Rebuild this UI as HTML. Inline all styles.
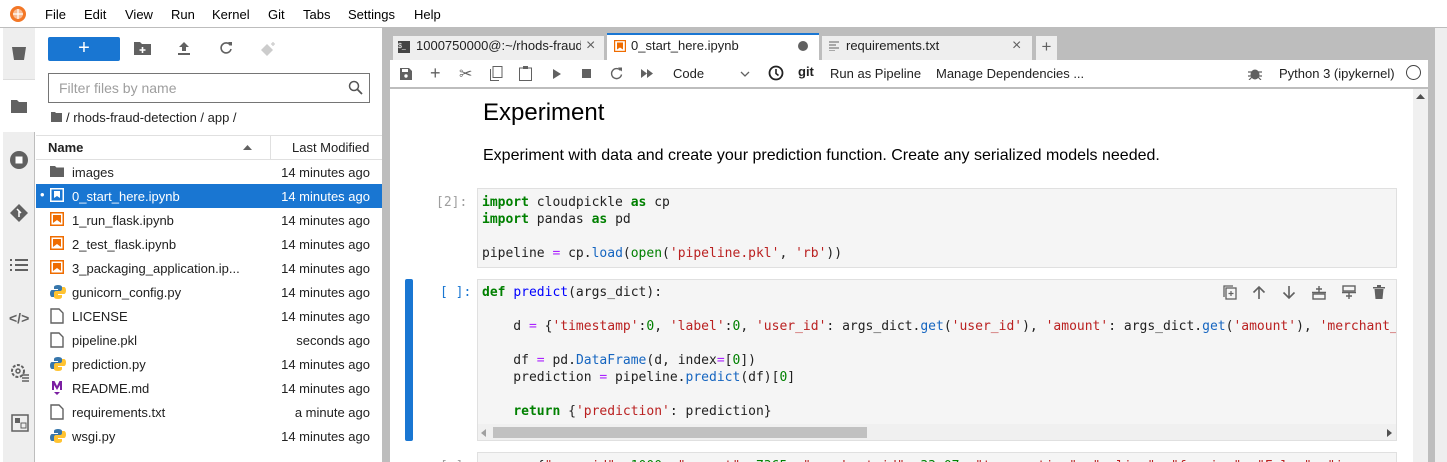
<!DOCTYPE html>
<html><head><meta charset="utf-8"><style>
*{box-sizing:border-box;margin:0;padding:0}
html,body{width:1447px;height:462px;overflow:hidden}
body{background:#fff;font-family:"Liberation Sans",sans-serif;font-size:13px;color:#212121;position:relative}
.a{position:absolute}
.menu{left:0;top:0;width:1447px;height:28px;background:#fff;border-bottom:1px solid #bdbdbd}
.menu span{position:absolute;top:7px;font-size:13px;color:#000}
.iconbar{left:3px;top:28px;width:32px;height:434px;background:#eee;border-right:1px solid #bdbdbd}
.fb{left:36px;top:28px;width:346px;height:434px;background:#fff}
.row{position:absolute;left:36px;width:346px;height:24px;font-size:13px}
.row .n{position:absolute;left:36px;top:5px}
.row .t{position:absolute;right:12px;top:5px}
.row svg{position:absolute;left:14px;top:4px}
.code{font-family:"DejaVu Sans Mono","Liberation Mono",monospace;font-size:13px;line-height:17px;white-space:pre;color:#212121}
.k{color:#008000;font-weight:bold}.s{color:#ba2121}.o{color:#aa22ff}.f{color:#0000ff}.b{color:#1565c0}.g{color:#008000}.nm{color:#008000}
</style></head><body>
<div class="a" style="left:0;top:28px;width:3px;height:434px;background:#fff"></div>
<div class="a menu">
 <svg class="a" style="left:9px;top:5px" width="18" height="18" viewBox="0 0 18 18"><circle cx="9" cy="9" r="8" fill="#f37726"/><circle cx="9" cy="9" r="5" fill="#fff" opacity=".5"/><path d="M4 9h10M9 4v10" stroke="#fff" stroke-width="1.2"/></svg>
 <span style="left:45px">File</span><span style="left:84px">Edit</span><span style="left:125px">View</span><span style="left:171px">Run</span><span style="left:212px">Kernel</span><span style="left:268px">Git</span><span style="left:303px">Tabs</span><span style="left:348px">Settings</span><span style="left:414px">Help</span>
</div>
<div class="a iconbar">
 <div class="a" style="left:0;top:0;width:32px;height:52px;background:#eee;border-bottom:1px solid #ddd"></div>
 <div class="a" style="left:0;top:52px;width:33px;height:52px;background:#fff"></div>
 <svg class="a" style="left:7px;top:16px" width="18" height="18" viewBox="0 0 18 18"><path d="M2 3h14l-2 13H4z" fill="#616161"/></svg>
 <svg class="a" style="left:7px;top:70px" width="18" height="16" viewBox="0 0 18 16"><path d="M1 2h6l2 2h8v11H1z" fill="#616161"/></svg>
 <svg class="a" style="left:6px;top:122px" width="20" height="20" viewBox="0 0 20 20"><circle cx="10" cy="10" r="9" fill="#616161"/><rect x="6.5" y="6.5" width="7" height="7" fill="#fff"/></svg>
 <svg class="a" style="left:6px;top:175px" width="20" height="20" viewBox="0 0 20 20"><path d="M10 1l9 9-9 9-9-9z" fill="#616161"/><path d="M8 6l4 4M10 8v6" stroke="#fff" stroke-width="1.5"/></svg>
 <svg class="a" style="left:7px;top:230px" width="18" height="14" viewBox="0 0 18 14"><g fill="#616161"><rect x="0" y="1" width="2" height="2"/><rect x="5" y="1" width="13" height="2"/><rect x="0" y="6" width="2" height="2"/><rect x="5" y="6" width="13" height="2"/><rect x="0" y="11" width="2" height="2"/><rect x="5" y="11" width="13" height="2"/></g></svg>
 <div class="a" style="left:6px;top:282px;font-size:14px;color:#616161;font-weight:bold">&lt;/&gt;</div>
 <svg class="a" style="left:7px;top:334px" width="20" height="20" viewBox="0 0 20 20"><circle cx="8" cy="9" r="6" fill="none" stroke="#616161" stroke-width="2" stroke-dasharray="3 1.5"/><circle cx="8" cy="9" r="2" fill="none" stroke="#616161" stroke-width="1.5"/><path d="M12 13h7M12 16h7M12 19h7" stroke="#616161" stroke-width="1.5"/></svg>
 <svg class="a" style="left:8px;top:386px" width="18" height="18" viewBox="0 0 18 18"><rect x="1" y="1" width="16" height="16" fill="none" stroke="#616161" stroke-width="1.5"/><rect x="4" y="4" width="5" height="5" fill="#616161"/><rect x="10" y="9" width="5" height="5" fill="none" stroke="#616161"/></svg>
</div>
<div class="a fb"></div>
<div class="a" style="left:48px;top:37px;width:72px;height:24px;background:#1976d2;border-radius:2px;color:#fff;font-size:20px;text-align:center;line-height:22px">+</div>
<svg class="a" style="left:134px;top:41px" width="17" height="14" viewBox="0 0 17 14"><path d="M0 1h6l2 2h9v11H0z" fill="#616161"/><path d="M8.5 6v6M5.5 9h6" stroke="#fff" stroke-width="1.6"/></svg>
<svg class="a" style="left:177px;top:41px" width="14" height="14" viewBox="0 0 14 14"><path d="M7 1l5 5H9v4H5V6H2z M1 12h12v2H1z" fill="#616161"/></svg>
<svg class="a" style="left:219px;top:41px" width="14" height="14" viewBox="0 0 14 14"><path d="M11.5 4.5A5 5 0 1 0 12 8" fill="none" stroke="#616161" stroke-width="1.6"/><path d="M9 1h4v4z" fill="#616161"/></svg>
<svg class="a" style="left:260px;top:41px" width="16" height="16" viewBox="0 0 16 16"><path d="M7 3l6 6-6 6-6-6z" fill="#ccc"/><path d="M13 1v4M11 3h4" stroke="#ccc" stroke-width="1.3"/></svg>
<div class="a" style="left:48px;top:73px;width:322px;height:30px;border:1px solid #757575;background:#fff"></div>
<div class="a" style="left:59px;top:80px;font-size:14px;color:#9e9e9e">Filter files by name</div>
<svg class="a" style="left:348px;top:80px" width="15" height="15" viewBox="0 0 15 15"><circle cx="6" cy="6" r="4.5" fill="none" stroke="#555" stroke-width="1.5"/><path d="M9.5 9.5l4.5 4.5" stroke="#555" stroke-width="1.8"/></svg>
<svg class="a" style="left:51px;top:112px" width="11" height="10" viewBox="0 0 11 10"><path d="M0 0h4l1 1h6v9H0z" fill="#616161"/></svg>
<div class="a" style="left:66px;top:110px;font-size:13px;color:#212121">/ rhods-fraud-detection / app /</div>
<div class="a" style="left:36px;top:135px;width:346px;height:25px;border-top:1px solid #e0e0e0;border-bottom:1px solid #e0e0e0"></div>
<div class="a" style="left:270px;top:135px;width:1px;height:25px;background:#e0e0e0"></div>
<div class="a" style="left:48px;top:140px;font-weight:bold;font-size:13px">Name</div>
<svg class="a" style="left:243px;top:145px" width="9" height="5"><path d="M0 5l4.5-5 4.5 5z" fill="#616161"/></svg>
<div class="a" style="left:292px;top:140px;font-size:13px">Last Modified</div>

<div class="row" style="top:160px"><svg width="14" height="14" viewBox="0 0 14 14"><path d="M0 2h5l1.5 1.5H14V13H0z" fill="#616161"/></svg><span class="n">images</span><span class="t">14 minutes ago</span></div>
<div class="row" style="top:184px;background:#1976d2;color:#fff"><span class="a" style="left:4px;top:3px">•</span><svg width="14" height="14" viewBox="0 0 14 14"><rect x=".75" y=".75" width="12.5" height="12.5" fill="none" stroke="#fff" stroke-width="1.5"/><path d="M4 3h6v7l-3-2-3 2z" fill="#fff"/></svg><span class="n">0_start_here.ipynb</span><span class="t">14 minutes ago</span></div>
<div class="row" style="top:208px"><svg width="14" height="14" viewBox="0 0 14 14"><rect x=".75" y=".75" width="12.5" height="12.5" fill="none" stroke="#ef6c00" stroke-width="1.5"/><path d="M3 3h8v8l-4-3-4 3z" fill="#ef6c00"/></svg><span class="n">1_run_flask.ipynb</span><span class="t">14 minutes ago</span></div>
<div class="row" style="top:232px"><svg width="14" height="14" viewBox="0 0 14 14"><rect x=".75" y=".75" width="12.5" height="12.5" fill="none" stroke="#ef6c00" stroke-width="1.5"/><path d="M3 3h8v8l-4-3-4 3z" fill="#ef6c00"/></svg><span class="n">2_test_flask.ipynb</span><span class="t">14 minutes ago</span></div>
<div class="row" style="top:256px"><svg width="14" height="14" viewBox="0 0 14 14"><rect x=".75" y=".75" width="12.5" height="12.5" fill="none" stroke="#ef6c00" stroke-width="1.5"/><path d="M3 3h8v8l-4-3-4 3z" fill="#ef6c00"/></svg><span class="n">3_packaging_application.ip...</span><span class="t">14 minutes ago</span></div>
<div class="row" style="top:280px"><svg width="16" height="16" viewBox="0 0 16 16"><path d="M8 1C4 1 4 3 4 3v2h4v1H2S0 6 0 9.5 2 13 2 13h2v-2s0-2 2-2h4s2 0 2-2V3s0-2-4-2z" fill="#3776ab"/><path d="M8 15c4 0 4-2 4-2v-2H8v-1h6s2 0 2-3.5S14 3 14 3h-2v2s0 2-2 2H6S4 7 4 9v4s0 2 4 2z" fill="#ffc331"/></svg><span class="n">gunicorn_config.py</span><span class="t">14 minutes ago</span></div>
<div class="row" style="top:304px"><svg width="14" height="16" viewBox="0 0 14 16"><path d="M1 1h8l4 4v10H1z" fill="none" stroke="#616161" stroke-width="1.4"/></svg><span class="n">LICENSE</span><span class="t">14 minutes ago</span></div>
<div class="row" style="top:328px"><svg width="14" height="16" viewBox="0 0 14 16"><path d="M1 1h8l4 4v10H1z" fill="none" stroke="#616161" stroke-width="1.4"/></svg><span class="n">pipeline.pkl</span><span class="t">seconds ago</span></div>
<div class="row" style="top:352px"><svg width="16" height="16" viewBox="0 0 16 16"><path d="M8 1C4 1 4 3 4 3v2h4v1H2S0 6 0 9.5 2 13 2 13h2v-2s0-2 2-2h4s2 0 2-2V3s0-2-4-2z" fill="#3776ab"/><path d="M8 15c4 0 4-2 4-2v-2H8v-1h6s2 0 2-3.5S14 3 14 3h-2v2s0 2-2 2H6S4 7 4 9v4s0 2 4 2z" fill="#ffc331"/></svg><span class="n">prediction.py</span><span class="t">14 minutes ago</span></div>
<div class="row" style="top:376px"><svg width="14" height="16" viewBox="0 0 14 16"><path d="M2 1h2.5L7 6l2.5-5H12v9H10V5L7 10 4 5v5H2z M4 12h6l-3 3z" fill="#7b1fa2"/></svg><span class="n">README.md</span><span class="t">14 minutes ago</span></div>
<div class="row" style="top:400px"><svg width="14" height="16" viewBox="0 0 14 16"><path d="M1 1h8l4 4v10H1z" fill="none" stroke="#616161" stroke-width="1.4"/></svg><span class="n">requirements.txt</span><span class="t">a minute ago</span></div>
<div class="row" style="top:424px"><svg width="16" height="16" viewBox="0 0 16 16"><path d="M8 1C4 1 4 3 4 3v2h4v1H2S0 6 0 9.5 2 13 2 13h2v-2s0-2 2-2h4s2 0 2-2V3s0-2-4-2z" fill="#3776ab"/><path d="M8 15c4 0 4-2 4-2v-2H8v-1h6s2 0 2-3.5S14 3 14 3h-2v2s0 2-2 2H6S4 7 4 9v4s0 2 4 2z" fill="#ffc331"/></svg><span class="n">wsgi.py</span><span class="t">14 minutes ago</span></div>

<div class="a" style="left:382px;top:28px;width:1065px;height:434px;background:#bdbdbd"></div>
<div class="a" style="left:1435px;top:28px;width:12px;height:434px;background:#eee"></div>
<div class="a" style="left:392px;top:35px;width:213px;height:25px;background:#eee;border:1px solid #bdbdbd;border-bottom:none"></div>
<div class="a" style="left:398px;top:41px;width:12px;height:12px;background:#444;color:#fff;font-size:7px;line-height:12px">$_</div>
<div class="a" style="left:416px;top:38px;width:165px;overflow:hidden;white-space:nowrap;font-size:13px">1000750000@:~/rhods-fraud-detection</div>
<div class="a" style="left:586px;top:37px;font-size:16px;color:#616161">×</div>
<div class="a" style="left:607px;top:33px;width:212px;height:28px;background:#fff;border-top:2px solid #1976d2"></div>
<svg class="a" style="left:614px;top:40px" width="12" height="12" viewBox="0 0 12 12"><rect x=".6" y=".6" width="10.8" height="10.8" fill="none" stroke="#ef6c00" stroke-width="1.2"/><path d="M3 2.5h6v7l-3-2-3 2z" fill="#ef6c00"/></svg>
<div class="a" style="left:631px;top:38px;font-size:13px">0_start_here.ipynb</div>
<div class="a" style="left:798px;top:41px;width:10px;height:10px;border-radius:50%;background:#616161"></div>
<div class="a" style="left:821px;top:35px;width:212px;height:25px;background:#eee;border:1px solid #bdbdbd;border-bottom:none"></div>
<svg class="a" style="left:829px;top:41px" width="10" height="10"><path d="M0 1h10M0 4h7M0 7h10M0 10h6" stroke="#616161"/></svg>
<div class="a" style="left:846px;top:38px;font-size:13px">requirements.txt</div>
<div class="a" style="left:1012px;top:37px;font-size:16px;color:#616161">×</div>
<div class="a" style="left:1035px;top:35px;width:23px;height:25px;background:#eee;border:1px solid #bdbdbd;border-bottom:none;text-align:center;font-size:17px;color:#616161;line-height:22px">+</div>
<div class="a" style="left:390px;top:60px;width:1038px;height:28px;background:#fff;border-bottom:1px solid #bdbdbd"></div>
<svg class="a" style="left:400px;top:68px" width="12" height="12"><path d="M0 0h9l3 3v9H0z" fill="#616161"/><rect x="2" y="1" width="6" height="3" fill="#fff"/><circle cx="6" cy="8" r="1.7" fill="#fff"/></svg>
<div class="a" style="left:430px;top:63px;font-size:18px;color:#616161">+</div>
<div class="a" style="left:459px;top:64px;font-size:16px;color:#616161">✂</div>
<svg class="a" style="left:490px;top:66px" width="13" height="15"><rect x="3" y=".5" width="9" height="11" fill="none" stroke="#616161"/><path d="M.5 3v11.5H9" fill="none" stroke="#616161"/></svg>
<svg class="a" style="left:519px;top:66px" width="13" height="15"><rect x=".5" y="2" width="12" height="12.5" fill="none" stroke="#616161"/><rect x="4" y="0" width="5" height="3" fill="#616161"/></svg>
<svg class="a" style="left:553px;top:69px" width="8" height="10"><path d="M0 0l8 5-8 5z" fill="#616161"/></svg>
<div class="a" style="left:582px;top:69px;width:9px;height:9px;background:#616161"></div>
<svg class="a" style="left:610px;top:67px" width="13" height="13"><path d="M10.5 3.5A5 5 0 1 0 11.5 7.5" fill="none" stroke="#616161" stroke-width="1.4"/><path d="M8 0.5h4v4z" fill="#616161"/></svg>
<svg class="a" style="left:641px;top:69px" width="13" height="9"><path d="M0 0l6 4.5-6 4.5zM6 0l6 4.5-6 4.5z" fill="#616161"/></svg>
<div class="a" style="left:673px;top:66px;font-size:13px">Code</div>
<svg class="a" style="left:740px;top:71px" width="10" height="6"><path d="M1 1l4 4 4-4" fill="none" stroke="#616161" stroke-width="1.3"/></svg>
<svg class="a" style="left:768px;top:65px" width="16" height="16"><circle cx="8" cy="8" r="6.5" fill="none" stroke="#222" stroke-width="1.8"/><path d="M8 4v4.5l2.5 2" fill="none" stroke="#222" stroke-width="1.6"/></svg>
<div class="a" style="left:798px;top:64px;font-size:13px;font-weight:bold">git</div>
<div class="a" style="left:830px;top:66px;font-size:13px">Run as Pipeline</div>
<div class="a" style="left:936px;top:66px;font-size:13px">Manage Dependencies ...</div>
<svg class="a" style="left:1248px;top:66px" width="14" height="14"><ellipse cx="7" cy="8.5" rx="4.5" ry="5" fill="#616161"/><path d="M0 6h14M0 10h14M1 14l3-3M13 14l-3-3" stroke="#616161" stroke-width="1.2"/></svg>
<div class="a" style="left:1279px;top:66px;font-size:13px">Python 3 (ipykernel)</div>
<div class="a" style="left:1406px;top:65px;width:15px;height:15px;border:1.5px solid #424242;border-radius:50%"></div>
<div class="a" style="left:390px;top:89px;width:1023px;height:373px;background:#fff"></div>
<div class="a" style="left:1413px;top:89px;width:15px;height:373px;background:#f0f0f0"></div>
<svg class="a" style="left:1416px;top:94px" width="9" height="5"><path d="M0 5l4.5-5 4.5 5z" fill="#505050"/></svg>
<div class="a" style="left:483px;top:99px;font-size:24px;color:#000">Experiment</div>
<div class="a" style="left:483px;top:147px;font-size:16px;color:#000">Experiment with data and create your prediction function. Create any serialized models needed.</div>

<div class="a code" style="left:436px;top:194px;color:#9e9e9e">[2]:</div>
<div class="a" style="left:477px;top:188px;width:920px;height:80px;background:#f5f5f5;border:1px solid #e0e0e0"></div>
<div class="a code" style="left:482px;top:194px"><span class="k">import</span> cloudpickle <span class="k">as</span> cp
<span class="k">import</span> pandas <span class="k">as</span> pd

pipeline <span class="o">=</span> cp<span>.</span><span class="b">load</span>(<span class="g">open</span>(<span class="s">'pipeline.pkl'</span>, <span class="s">'rb'</span>))</div>

<div class="a" style="left:405px;top:279px;width:8px;height:162px;background:#1976d2;border-radius:2px"></div>
<div class="a code" style="left:440px;top:284px;color:#1976d2">[ ]:</div>
<div class="a" style="left:477px;top:279px;width:920px;height:162px;background:#f5f5f5;border:1px solid #e0e0e0;overflow:hidden">
 <div class="a" style="left:0;top:144px;width:918px;height:16px;background:#f0f0f0"></div>
 <div class="a" style="left:15px;top:147px;width:374px;height:11px;background:#c1c1c1"></div>
 <svg class="a" style="left:3px;top:149px" width="5" height="8"><path d="M5 0L0 4l5 4z" fill="#a0a0a0"/></svg>
 <svg class="a" style="left:909px;top:149px" width="5" height="8"><path d="M0 0l5 4-5 4z" fill="#505050"/></svg>
</div>
<div class="a code" style="left:482px;top:284px;width:914px;overflow:hidden"><span class="k">def</span> <span class="f">predict</span>(args_dict):

    d <span class="o">=</span> {<span class="s">'timestamp'</span>:<span class="nm">0</span>, <span class="s">'label'</span>:<span class="nm">0</span>, <span class="s">'user_id'</span>: args_dict.<span class="b">get</span>(<span class="s">'user_id'</span>), <span class="s">'amount'</span>: args_dict.<span class="b">get</span>(<span class="s">'amount'</span>), <span class="s">'merchant_id'</span>

    df <span class="o">=</span> pd.<span class="b">DataFrame</span>(d, index<span class="o">=</span>[<span class="nm">0</span>])
    prediction <span class="o">=</span> pipeline.<span class="b">predict</span>(df)[<span class="nm">0</span>]

    <span class="k">return</span> {<span class="s">'prediction'</span>: prediction}</div>
<svg class="a" style="left:1223px;top:285px" width="14" height="15"><rect x="3" y="3" width="10" height="11" fill="none" stroke="#616161" stroke-width="1.3"/><path d="M1 12V1h9" fill="none" stroke="#616161" stroke-width="1.3"/><path d="M8 6v5M5.5 8.5h5" stroke="#616161" stroke-width="1.2"/></svg>
<svg class="a" style="left:1252px;top:285px" width="14" height="15"><path d="M7 14V2M1.5 7.5L7 2l5.5 5.5" fill="none" stroke="#616161" stroke-width="1.6"/></svg>
<svg class="a" style="left:1282px;top:285px" width="14" height="15"><path d="M7 1v12M1.5 7.5L7 13l5.5-5.5" fill="none" stroke="#616161" stroke-width="1.6"/></svg>
<svg class="a" style="left:1312px;top:285px" width="14" height="15"><rect x="1" y="9" width="12" height="5" fill="none" stroke="#616161" stroke-width="1.4"/><path d="M7 1v6M4 4h6M0 7.5h14" stroke="#616161" stroke-width="1.4"/></svg>
<svg class="a" style="left:1342px;top:285px" width="14" height="15"><rect x="1" y="1" width="12" height="5" fill="none" stroke="#616161" stroke-width="1.4"/><path d="M7 8v6M4 11h6M0 7.5h14" stroke="#616161" stroke-width="1.4"/></svg>
<svg class="a" style="left:1373px;top:285px" width="12" height="14"><path d="M0 2h12v1.5H0zM4 0h4v2H4zM1.5 4h9l-1 10h-7z" fill="#616161"/></svg>

<div class="a" style="left:477px;top:452px;width:920px;height:20px;background:#f5f5f5;border:1px solid #e0e0e0"></div>
<div class="a code" style="left:440px;top:458px;color:#9e9e9e">[ ]:</div>
<div class="a code" style="left:482px;top:458px;width:914px;overflow:hidden">       {<span class="s">"user_id"</span>: <span class="nm">1000</span>, <span class="s">"amount"</span>: <span class="nm">7365</span>, <span class="s">"merchant_id"</span>: <span class="nm">33.07</span>, <span class="s">"transaction"</span>: <span class="s">"online"</span>, <span class="s">"foreign"</span>: <span class="s">"False"</span>, <span class="s">"i</span></div>
</body></html>
